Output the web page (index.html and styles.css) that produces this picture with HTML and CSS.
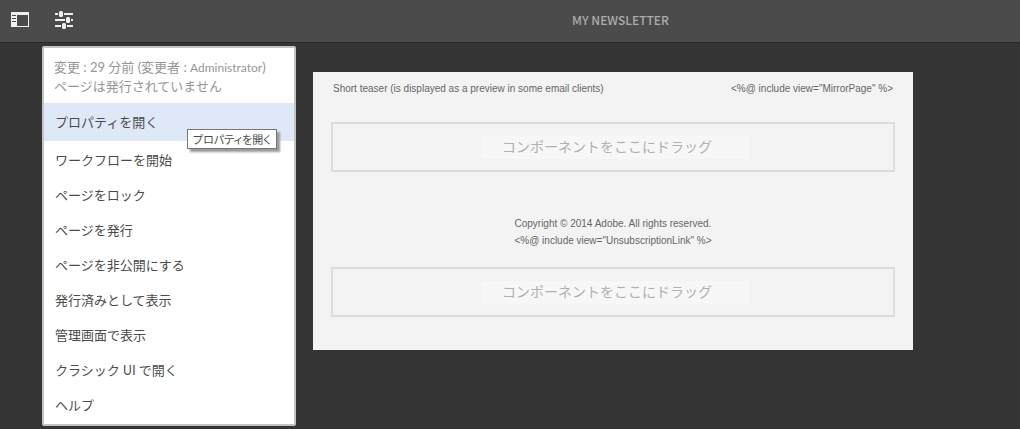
FILE: index.html
```html
<!DOCTYPE html>
<html lang="ja">
<head>
<meta charset="utf-8">
<title>MY NEWSLETTER</title>
<link rel="stylesheet" href="styles.css">
</head>
<body>
<header class="topbar">
  <div class="tools">
    <button class="tool" type="button" aria-label="サイドパネル">
      <svg width="18" height="15" viewBox="0 0 18 15" aria-hidden="true">
        <path fill="#f0f0f0" fill-rule="evenodd" d="M0 0h18v15H0zM6 3v11h11V3z"/>
        <path fill="#4b4b4b" d="M1 3h4v1H1zM1 6h4v1H1zM1 9h4v1H1z"/>
      </svg>
    </button>
    <button class="tool" type="button" aria-label="ページ情報" aria-expanded="true">
      <svg width="18" height="18" viewBox="0 0 18 18" aria-hidden="true">
        <g fill="#f0f0f0">
          <path d="M0 2h3v2H0zM9 2h9v2H9zM0 8h10v2H0zM16 8h2v2h-2zM0 14h6v2H0zM12 14h6v2h-6z"/>
          <rect x="4" y="0" width="4" height="6" rx="1.5"/>
          <rect x="11" y="6" width="4" height="6" rx="1.5"/>
          <rect x="7" y="12" width="4" height="6" rx="1.5"/>
        </g>
      </svg>
    </button>
  </div>
  <h1 class="title">MY NEWSLETTER</h1>
</header>
<main class="workspace">
  <section class="menu">
    <p class="status">変更 : 29 分前 (変更者 : <span class="author">Administrator</span>)<br>ページは発行されていません</p>
    <button class="item item-active" type="button" aria-describedby="tip">プロパティを開く</button>
    <span class="tooltip" id="tip" role="tooltip">プロパティを開く</span>
    <button class="item" type="button">ワークフローを開始</button>
    <button class="item" type="button">ページをロック</button>
    <button class="item" type="button">ページを発行</button>
    <button class="item" type="button">ページを非公開にする</button>
    <button class="item" type="button">発行済みとして表示</button>
    <button class="item" type="button">管理画面で表示</button>
    <button class="item" type="button">クラシック UI で開く</button>
    <button class="item" type="button">ヘルプ</button>
  </section>
  <article class="sheet">
    <div class="teaser">
      <span>Short teaser (is displayed as a preview in some email clients)</span>
      <span>&lt;%@ include view="MirrorPage" %&gt;</span>
    </div>
    <div class="dropzone"><span class="hint">コンポーネントをここにドラッグ</span></div>
    <div class="legal">
      <p>Copyright © 2014 Adobe. All rights reserved.<br>&lt;%@ include view="UnsubscriptionLink" %&gt;</p>
    </div>
    <div class="dropzone"><span class="hint">コンポーネントをここにドラッグ</span></div>
  </article>
</main>
</body>
</html>
```
FILE: styles.css
```css
* {
  box-sizing: border-box;
}

body {
  margin: 0;
  min-height: 100vh;
  background: #353535;
  color: #4b4b4b;
  font-family: "Noto Sans CJK JP", sans-serif;
  font-size: 13px;
}

button {
  border: 0;
  background: none;
  color: inherit;
  font: inherit;
  cursor: pointer;
}

.topbar {
  display: grid;
  grid-template-columns: 221px 1fr;
  align-items: center;
  height: 43px;
  padding-bottom: 3px;
  border-bottom: 1px solid #292929;
  background: #4b4b4b;
}

.tools {
  display: flex;
  align-items: center;
  gap: 26px;
  padding-left: 11px;
}

.tool {
  padding: 0;
}

.tool svg {
  display: block;
}

.title {
  margin: 0;
  color: #acacac;
  font-size: 12px;
  font-weight: 500;
  line-height: 18px;
  text-align: center;
}

.workspace {
  display: flex;
  align-items: flex-start;
  gap: 17px;
  padding: 3px 16px 3px 42px;
}

.menu {
  position: relative;
  flex: 0 0 254px;
  padding-bottom: 2px;
  border: 2px solid #c4c4c4;
  border-radius: 2px;
  background: #fff;
}

.status {
  margin: 0;
  padding: 10px 10px 7px;
  color: #969696;
  font-family: Lato, "Noto Sans CJK JP", sans-serif;
  line-height: 19px;
}

.author {
  font-size: 12px;
}

.item {
  display: block;
  width: 100%;
  padding: 8px 11px;
  line-height: 19px;
  text-align: left;
}

.item-active {
  padding: 9px 11px 10px;
  margin-bottom: 1px;
  background: #dfe8f7;
}

.tooltip {
  position: absolute;
  top: 81px;
  left: 143px;
  padding: 0 5px;
  border: 1px solid #767676;
  background: #fff;
  box-shadow: 3px 3px 2px #9a9a9a;
  font-size: 11px;
  font-feature-settings: "palt";
  line-height: 18px;
  white-space: nowrap;
}

.sheet {
  flex: 0 1 600px;
  margin-top: 26px;
  padding: 8px 18px 33px;
  background: #f3f3f3;
}

.teaser,
.legal {
  color: #666;
  font-family: "Liberation Sans", Arial, sans-serif;
  font-size: 10px;
  line-height: 17px;
}

.teaser {
  display: flex;
  justify-content: space-between;
  padding: 0 2px;
  margin-bottom: 25px;
}

.dropzone {
  display: flex;
  justify-content: center;
  align-items: center;
  height: 50px;
  padding-left: 4px;
  border: 2px solid #dcdcdc;
}

.hint {
  padding: 0 37px 3px 21px;
  background: #f7f7f7;
  color: #b0b0b0;
  font-size: 14px;
  line-height: 20px;
}

.legal {
  display: flex;
  justify-content: center;
  padding: 43px 0 18px;
}

.legal p {
  margin: 0;
}
```
